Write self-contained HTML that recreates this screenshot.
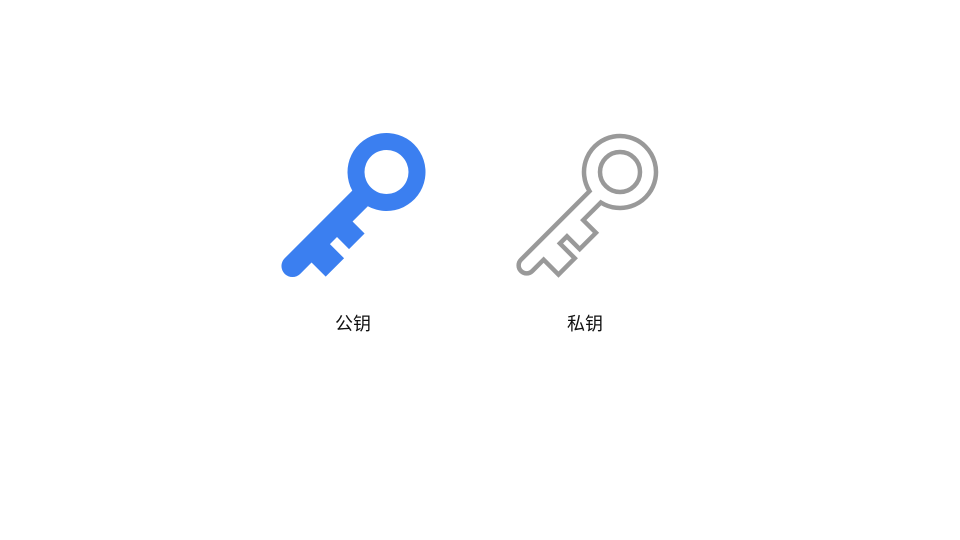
<!DOCTYPE html>
<html><head><meta charset="utf-8"><style>
html,body{margin:0;padding:0;background:#fff;width:960px;height:540px;overflow:hidden}
.t{position:absolute;top:310px;font:18px "Liberation Sans","Noto Sans CJK SC",sans-serif;color:#111;width:100px;text-align:center}
</style></head><body>
<svg width="960" height="540" style="position:absolute;left:0;top:0">
<g transform="translate(386.5,172) rotate(135)">
<path fill="#3b7ff0" fill-rule="evenodd" d="M37.4,11 L133,11 A11,11 0 0 0 133,-11 L117,-11 L117,-31 L91,-31 L91,-11 L81,-11 L81,-28 L59,-28 L59,-11 L37.4,-11 A39,39 0 1 0 37.4,11 Z M22,0 A22,22 0 1 0 -22,0 A22,22 0 1 0 22,0 Z"/>
</g>
<g transform="translate(620,172) rotate(135)" fill="none" stroke="#999" stroke-width="4.5" stroke-linejoin="miter">
<path d="M35.1,8 L132,8 A8,8 0 0 0 132,-8 L116,-8 L116,-29 L93,-29 L93,-8 L83,-8 L83,-26 L60,-26 L60,-8 L35.1,-8 A36,36 0 1 0 35.1,8 Z"/>
<circle cx="0" cy="0" r="20"/>
</g>
</svg>
<div class="t" style="left:303px">公钥</div>
<div class="t" style="left:535px">私钥</div>
</body></html>
